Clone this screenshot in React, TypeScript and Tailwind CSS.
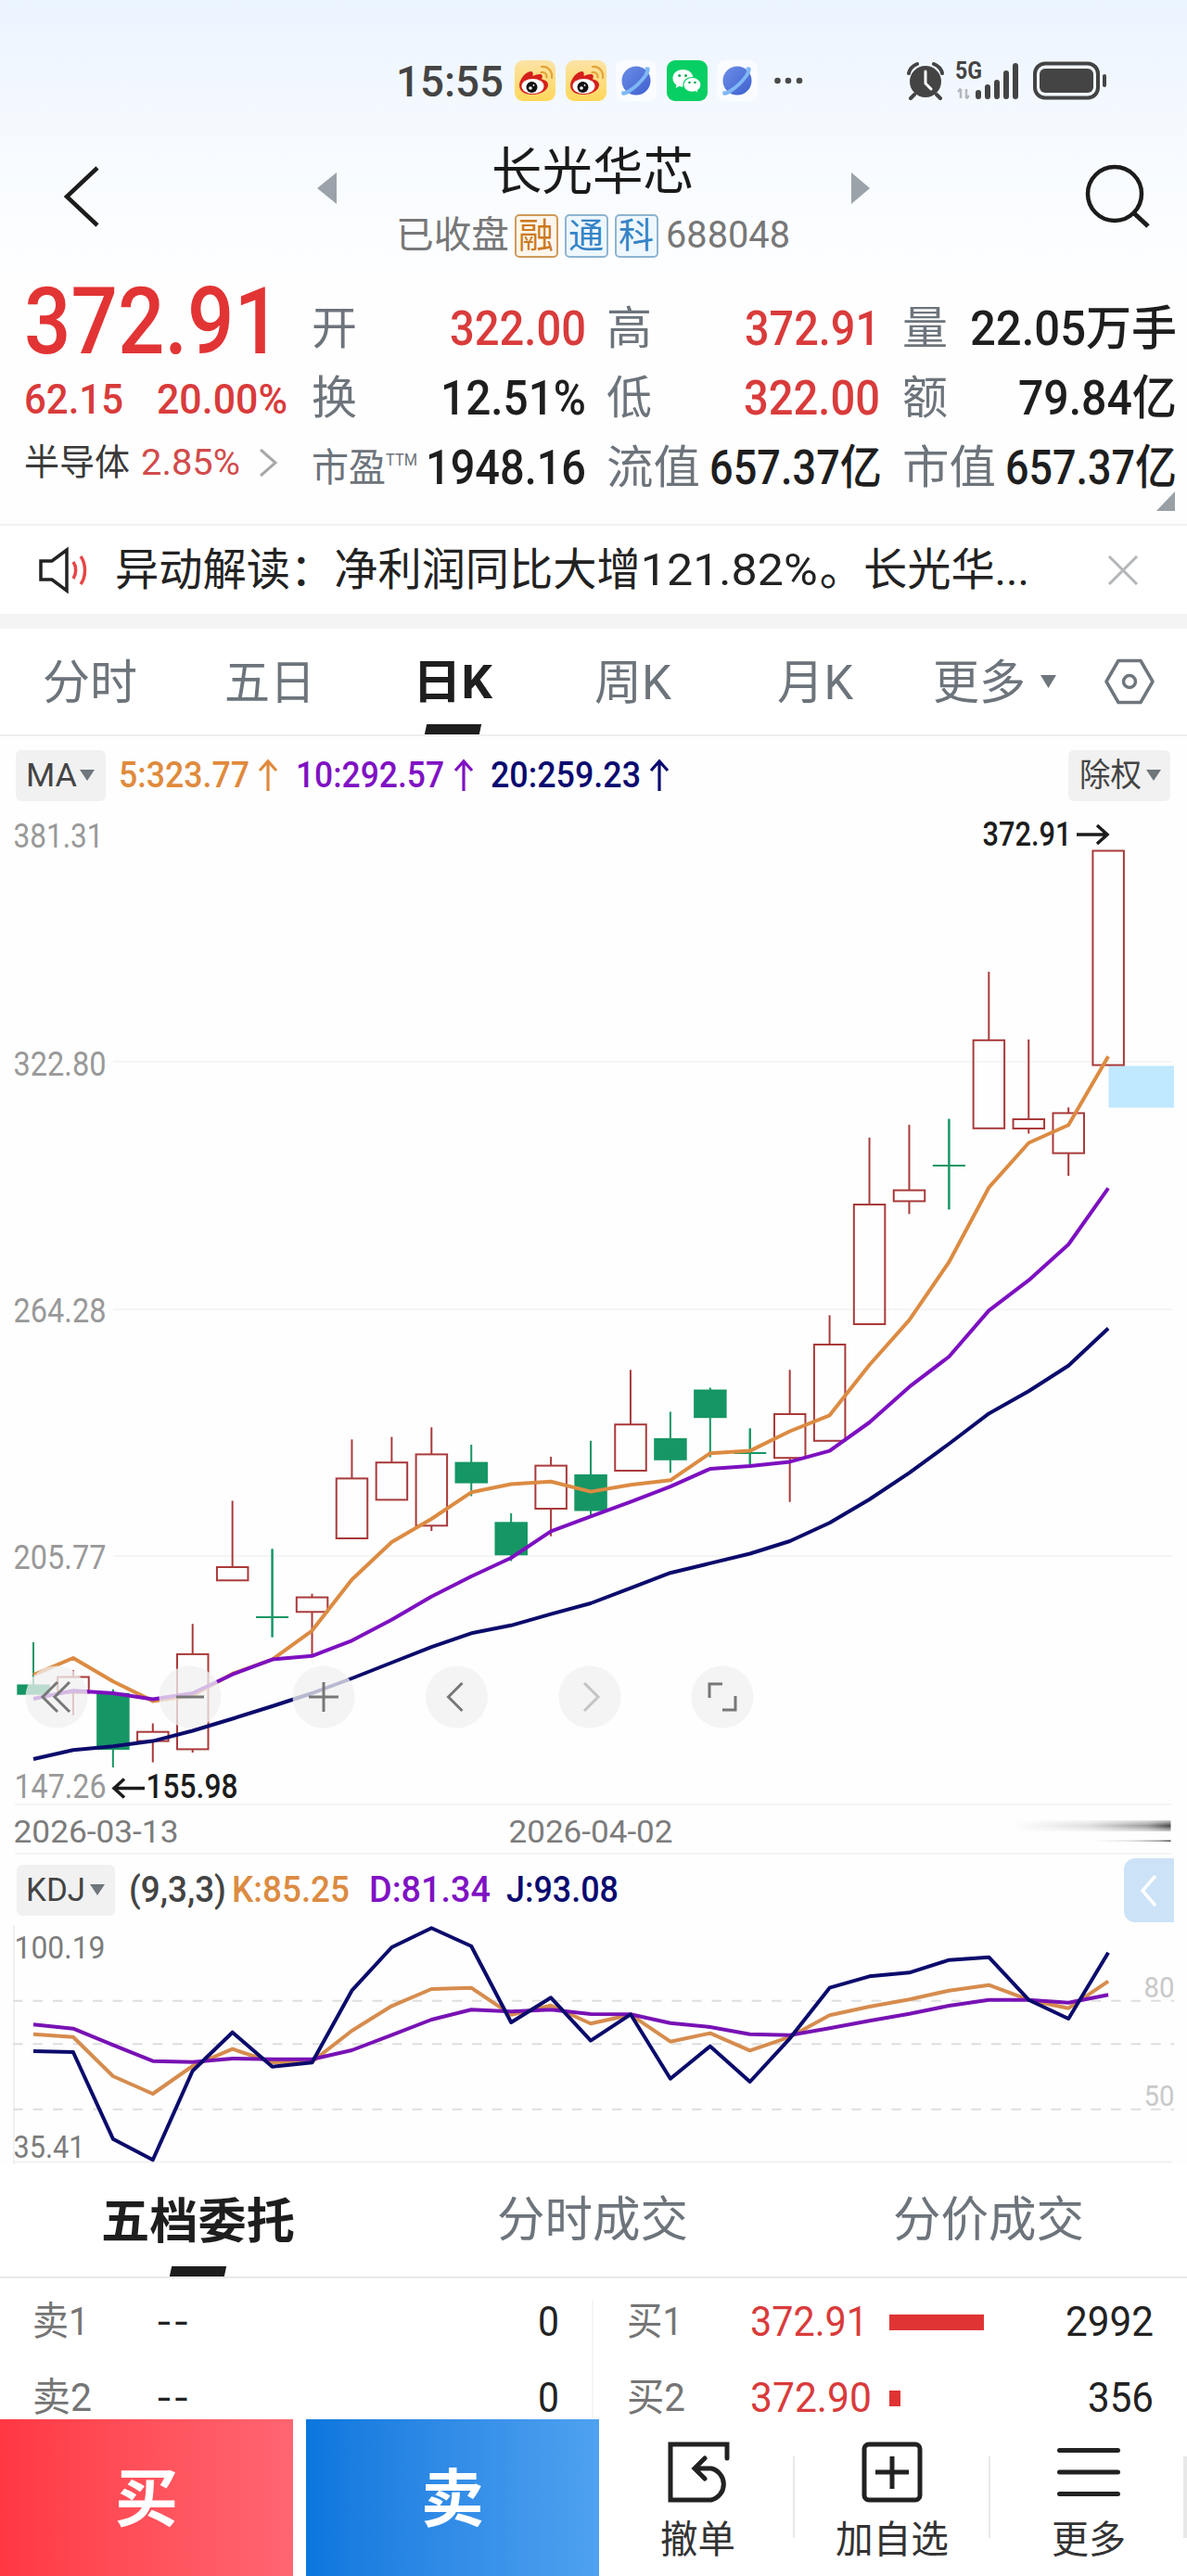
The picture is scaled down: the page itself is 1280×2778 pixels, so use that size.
import React, { useLayoutEffect, useRef, useState } from "react";

/* Text squeezed or stretched horizontally to a given width, like a condensed DIN face. */
function Fit({ w, className = "", children }: { w: number; className?: string; children: React.ReactNode }) {
  const ref = useRef<HTMLSpanElement>(null);
  const [s, setS] = useState(1);
  useLayoutEffect(() => {
    if (ref.current) setS(w / ref.current.getBoundingClientRect().width * s);
  }, [w]);
  return (
    <span className={"inline-flex shrink-0 justify-start whitespace-nowrap " + className} style={{ width: w }}>
      <span ref={ref} className="inline-block origin-left shrink-0" style={{ transform: `scaleX(${s})` }}>
        {children}
      </span>
    </span>
  );
}

const Weibo = () => (
  <svg className="h-11 w-[44px] shrink-0" viewBox="0 0 44 44">
    <defs>
      <linearGradient id="wb" x1="0" y1="0" x2="0" y2="1">
        <stop offset="0" stopColor="#fbe3a6" />
        <stop offset="1" stopColor="#ffd75a" />
      </linearGradient>
    </defs>
    <rect width="44" height="44" rx="9" fill="url(#wb)" />
    <path d="M5 27C5 20 13 11 18 12c2 .5 2 3 1.500 5 4-2 9-3 10-1 .8 1.500 0 3-.5 4.500 4 .5 7 2.500 7 6 0 6-8 10.500-17 10.500S5 33 5 27z" fill="#d5201c" />
    <ellipse cx="19.500" cy="28" rx="12" ry="8" fill="#fff" />
    <ellipse cx="18.500" cy="29" rx="6" ry="6" fill="#111" />
    <circle cx="17" cy="30" r="1.800" fill="#fff" />
    <circle cx="20.500" cy="27" r=".9" fill="#fff" />
    <path d="M29 7c7-1 12 5 11 12M28.500 13c4-.5 6.500 2 6 5.500" fill="none" stroke="#e2a33a" strokeWidth="2.200" strokeLinecap="round" />
  </svg>
);

const Planet = () => (
  <svg className="h-11 w-[44px] shrink-0" viewBox="0 0 44 44">
    <defs>
      <linearGradient id="pl" x1="0" y1="0" x2="1" y2="1">
        <stop offset="0" stopColor="#6c8fe6" />
        <stop offset="1" stopColor="#3f5fd0" />
      </linearGradient>
    </defs>
    <rect width="44" height="44" rx="9" fill="#fbfcff" />
    <circle cx="22" cy="22" r="15.500" fill="url(#pl)" />
    <path d="M31 8c5-2 7 0 5 5C33 21 19 34 12 37c-5 2-7 0-5-4 2 1 4 0 7-2C21 27 30 18 32 12c.6-2 .5-3-1-4z" fill="#7fb8f5" />
  </svg>
);

const WeChat = () => (
  <svg className="h-11 w-[44px] shrink-0" viewBox="0 0 44 44">
    <rect width="44" height="44" rx="9" fill="#07cf63" />
    <path d="M17.500 10C11 10 6.500 14 6.500 19.500c0 3 1.500 5.500 4 7.200L9.500 30l4-2c1.300.4 2.600.6 4 .6 6.500 0 11-4 11-9.200S24 10 17.500 10z" fill="#fff" />
    <path d="M27.500 18.500c-5.500 0-9.500 3.400-9.500 8s4 7.800 9.500 7.800c1.200 0 2.300-.2 3.300-.5l3.400 1.700-.8-2.900c2.200-1.500 3.600-3.600 3.600-6.100 0-4.600-4-8-9.500-8z" fill="#fff" stroke="#07cf63" strokeWidth="1.200" />
    <g fill="#07a855">
      <circle cx="13.700" cy="16.500" r="1.500" /><circle cx="20.500" cy="16.500" r="1.500" />
      <circle cx="24.500" cy="24" r="1.300" /><circle cx="30.500" cy="24" r="1.300" />
    </g>
  </svg>
);

function StatusBar() {
  return (
    <div className="flex h-[130px] items-start pt-[65px] pl-[427px]">
      <Fit w={116} className="mt-px text-[46px] leading-[44px] font-medium text-[#444]">15:55</Fit>
      <div className="ml-3 flex gap-[10.5px]"><Weibo /><Weibo /><Planet /><WeChat /><Planet /></div>
      <svg className="ml-[14px] h-11 w-9" viewBox="0 0 36 44">
        <g fill="#4a4a4a"><circle cx="7.500" cy="22" r="3.300" /><circle cx="19" cy="22" r="3.300" /><circle cx="31" cy="22" r="3.300" /></g>
      </svg>
      <svg className="ml-[109px] h-11 w-[44px]" viewBox="0 0 44 44">
        <circle cx="22" cy="23" r="17" fill="#444" />
        <path d="M4 14c1-5 4-8 9-10M40 14c-1-5-4-8-9-10M10 37l-4 4M34 37l4 4" stroke="#444" strokeWidth="4" strokeLinecap="round" fill="none" />
        <path d="M22 12v13l6 6" stroke="#fff" strokeWidth="3" fill="none" strokeLinecap="round" />
      </svg>
      <svg className="ml-[10px] h-11 w-[69px] shrink-0" viewBox="0 0 69 44">
        <text x="0" y="20" fontSize="25" fontWeight="700" fill="#444" textLength="29" lengthAdjust="spacingAndGlyphs">5G</text>
        <path d="M6 41V31M3 34l3-3.500M12 31v10M15 38l-3 3.500" stroke="#b5b8bd" strokeWidth="2.500" fill="none" />
        <g stroke="#444" strokeWidth="6" strokeLinecap="round">
          <path d="M25 35v4M35 29v10M45 24v15M55 14v25M65 6v33" />
        </g>
      </svg>
      <svg className="ml-[15px] h-11 w-[82px]" viewBox="0 0 82 44">
        <rect x="2" y="3.500" width="68" height="37" rx="11" fill="none" stroke="#444" strokeWidth="4" />
        <rect x="7" y="9" width="58" height="26" rx="6" fill="#444" />
        <path d="M77 17v10" stroke="#444" strokeWidth="4" strokeLinecap="round" />
      </svg>
    </div>
  );
}

function Tag({ c, children }: { c: "o" | "b"; children: React.ReactNode }) {
  const col = c === "o" ? "border-[#cf9a5a] bg-[#fdf6ec] text-[#cc7a22]" : "border-[#8fb4d0] bg-[#eef7fe] text-[#3584c6]";
  return <span className={"flex h-[47px] w-[47px] shrink-0 items-center justify-center rounded-[5px] border-2 text-[38px] leading-none " + col}>{children}</span>;
}

function Header() {
  return (
    <header className="h-[290px] bg-linear-to-b from-[#ebf4ff] via-[#f6faff] to-[#fdfeff]">
      <StatusBar />
      <div className="flex items-start">
        <svg className="mt-[47px] ml-[66px] h-[70px] w-[44px] shrink-0" viewBox="0 0 44 70">
          <path d="M39 4L6 35l33 31" fill="none" stroke="#1c1c1c" strokeWidth="4.500" />
        </svg>
        <svg className="mt-[55px] ml-[232px] h-9 w-[22px] shrink-0" viewBox="0 0 22 36"><path d="M21 1v34L0 18z" fill="#9aa3aa" /></svg>
        <div className="ml-[62px] flex w-[426px] flex-col items-center">
          <div className="mt-[26px] flex h-[58px] items-center text-[55px] leading-none text-[#1a1a1a]"><Fit w={218}>长光华芯</Fit></div>
          <div className="mt-[15px] flex h-[50px] items-center text-[40px] leading-none text-[#777]">
            <Fit w={122}>已收盘</Fit>
            <div className="ml-[6px] flex gap-[7px]"><Tag c="o">融</Tag><Tag c="b">通</Tag><Tag c="b">科</Tag></div>
            <Fit w={134} className="ml-[8px]">688048</Fit>
          </div>
        </div>
        <svg className="mt-[55px] ml-[65px] h-9 w-[22px] shrink-0" viewBox="0 0 22 36"><path d="M1 1v34l20-17z" fill="#9aa3aa" /></svg>
        <svg className="mt-[46px] ml-[231px] h-[72px] w-[74px] shrink-0" viewBox="0 0 74 72">
          <circle cx="32" cy="33" r="29" fill="none" stroke="#1c1c1c" strokeWidth="4.500" />
          <path d="M53 54l15 14" stroke="#1c1c1c" strokeWidth="5" />
        </svg>
      </div>
    </header>
  );
}

type Q = { l: React.ReactNode; lw: number; v: string; vw: number; red?: boolean };
function Cell({ q, className }: { q: Q; className: string }) {
  return (
    <div className={"flex h-[75px] items-center justify-between " + className}>
      <Fit w={q.lw} className="text-[49px] text-[#6d747b]">{q.l}</Fit>
      <Fit w={q.vw} className={"text-[51px] font-medium " + (q.red ? "text-[#d93b3b]" : "text-[#1e1e1e]")}>{q.v}</Fit>
    </div>
  );
}

function Quote() {
  const c1: Q[] = [{ l: "开", lw: 49, v: "322.00", vw: 147, red: true }, { l: "换", lw: 49, v: "12.51%", vw: 157 }];
  const c2: Q[] = [{ l: "高", lw: 49, v: "372.91", vw: 146, red: true }, { l: "低", lw: 49, v: "322.00", vw: 147, red: true }, { l: "流值", lw: 101, v: "657.37亿", vw: 186 }];
  const c3: Q[] = [{ l: "量", lw: 49, v: "22.05万手", vw: 223 }, { l: "额", lw: 49, v: "79.84亿", vw: 171 }, { l: "市值", lw: 101, v: "657.37亿", vw: 185 }];
  return (
    <section className="flex h-[275px] bg-[#fefefe] leading-none">
      <div className="ml-[26px] w-[310px]">
        <div className="mt-[7px] flex h-[100px] items-center text-[100px] font-medium text-[#e23434]"><Fit w={277}>372.91</Fit></div>
        <div className="mt-[8px] flex h-[50px] items-center text-[45px] font-medium text-[#d93b3b]">
          <Fit w={107}>62.15</Fit><Fit w={141} className="ml-[36px]">20.00%</Fit>
        </div>
        <div className="mt-[19px] flex h-[50px] items-center text-[39px] text-[#3a3a3a]">
          <Fit w={114}>半导体</Fit><Fit w={107} className="ml-[12px] text-[#d14b4b]">2.85%</Fit>
          <svg className="ml-[20px] h-8 w-[22px]" viewBox="0 0 22 32"><path d="M2 2l16 14L2 30" fill="none" stroke="#a8a8a8" strokeWidth="3" /></svg>
        </div>
      </div>
      <div className="mt-[27px] w-[296px]">
        {c1.map((q, i) => <Cell key={i} q={q} className="" />)}
        <div className="flex h-[75px] items-center justify-between">
          <div className="flex items-start text-[#6d747b]"><Fit w={80} className="text-[42px]">市盈</Fit><Fit w={34} className="mt-[3px] text-[18px]">TTM</Fit></div>
          <Fit w={173} className="text-[51px] font-medium text-[#1e1e1e]">1948.16</Fit>
        </div>
      </div>
      <div className="mt-[27px] ml-[22px] w-[297px]">{c2.map((q, i) => <Cell key={i} q={q} className={i < 2 ? "pr-[2px]" : ""} />)}</div>
      <div className="mt-[27px] ml-[22px] w-[296px]">
        {c3.map((q, i) => <Cell key={i} q={q} className="" />)}
        <svg className="-mt-[12px] ml-[274px] h-[22px] w-[21px]" viewBox="0 0 21 22"><path d="M20 0v21H0z" fill="#98a0a6" /></svg>
      </div>
    </section>
  );
}

function News() {
  return (
    <section className="flex h-[97px] items-center border-t-2 border-[#f1f1f1] bg-white leading-none">
      <svg className="ml-[41px] h-[54px] w-[56px] shrink-0" viewBox="0 0 56 54">
        <path d="M31 5v44L15 37H3V17h12z" fill="none" stroke="#222" strokeWidth="3.500" />
        <path d="M38 18c3.500 5 3.500 13 0 18M46 12c6 8 6 22 0 30" fill="none" stroke="#e84545" strokeWidth="3.500" />
      </svg>
      <Fit w={986} className="ml-[27px] text-[48px] text-[#222]">异动解读：净利润同比大增<span className="inline-block w-[196px]"><Fit w={194}>121.82%</Fit></span>。长光华...</Fit>
      <svg className="ml-[84px] h-8 w-[34px]" viewBox="0 0 34 32"><path d="M2 1l30 30M32 1L2 31" stroke="#b4b7ba" strokeWidth="3" /></svg>
    </section>
  );
}

const Tri = ({ className }: { className: string }) => (
  <svg className={"shrink-0 " + className} viewBox="0 0 16 12" preserveAspectRatio="none"><path d="M0 0h16L8 12z" fill="#6f767c" /></svg>
);

function PeriodTabs() {
  const t = "mt-[3px] text-[51px] text-[#6d747b]";
  return (
    <nav className="flex h-[116px] items-center border-b-2 border-[#eeeeee] bg-white pl-[46px] leading-none">
      <Fit w={102} className={t}>分时</Fit>
      <Fit w={98} className={"ml-[94px] " + t}>五日</Fit>
      <div className="ml-[102px] flex h-[114px] w-[92px] flex-col items-center justify-end">
        <Fit w={86} className="text-[50px] font-bold text-[#1e1e1e]">日K</Fit>
        <span className="mt-[20px] h-[11px] w-[59px] -skew-x-12 bg-[#1e1e1e]" />
      </div>
      <Fit w={83} className={"ml-[107px] " + t}>周K</Fit>
      <Fit w={82} className={"ml-[114px] " + t}>月K</Fit>
      <Fit w={100} className={"ml-[86px] " + t}>更多</Fit>
      <Tri className="ml-[16px] h-[14px] w-[17px]" />
      <svg className="ml-[51px] h-[50px] w-[56px]" viewBox="0 0 56 50">
        <path d="M16 2.500h24L53 25 40 47.500H16L3 25z" fill="none" stroke="#6f767c" strokeWidth="3.500" strokeLinejoin="round" />
        <circle cx="28" cy="25" r="6.500" fill="none" stroke="#6f767c" strokeWidth="3.500" />
      </svg>
    </nav>
  );
}

const Up = ({ className }: { className: string }) => (
  <svg className={"h-9 w-[22px] shrink-0 " + className} viewBox="0 0 22 36"><path d="M11 35V3M2 13l9-10 9 10" fill="none" stroke="currentColor" strokeWidth="3.200" /></svg>
);

function MaRow() {
  return (
    <div className="flex h-[72px] items-center bg-[#fefefe] pt-[12px] pl-[17px] text-[38px] leading-none font-medium">
      <div className="flex h-[55px] w-[97px] shrink-0 items-center rounded-[6px] bg-[#f1f1f1] pl-[11px] text-[35px] font-normal text-[#444]">
        <Fit w={55}>MA</Fit><Tri className="ml-[3px] h-3 w-4" />
      </div>
      <Fit w={141} className="ml-[14px] text-[#e08a3c]">5:323.77</Fit><Up className="ml-[9px] text-[#e08a3c]" />
      <Fit w={160} className="ml-[19px] text-[#8012c4]">10:292.57</Fit><Up className="ml-[10px] text-[#8012c4]" />
      <Fit w={162} className="ml-[18px] text-[#0a0a70]">20:259.23</Fit><Up className="ml-[9px] text-[#0a0a70]" />
      <div className="ml-[430px] flex h-[55px] w-[110px] shrink-0 items-center rounded-[6px] bg-[#f1f1f1] pl-[12px] text-[35px] font-normal text-[#444]">
        <Fit w={67}>除权</Fit><Tri className="ml-[5px] h-3 w-4" />
      </div>
    </div>
  );
}

const X0 = 36;
const STEP = 42.93;
const pts = (ys: number[]) => ys.map((y, i) => `${(X0 + i * STEP).toFixed(1)},${y}`).join(" ");

/* high, body top, body bottom, low, kind: r = rising, g = falling, c = unchanged */
const candles: [number, number, number, number, string][] = [
  [1771, 1817.5, 1826.7, 1826.7, "g"], [1801, 1808.5, 1825.6, 1849.7, "r"], [1821.7, 1826.7, 1886, 1906, "g"],
  [1858.5, 1867.7, 1877.6, 1900.6, "r"], [1751.3, 1783.9, 1886.4, 1890, "r"], [1618.5, 1690, 1704.3, 1704.3, "r"],
  [1670.6, 1744, 1744, 1765.5, "c"], [1718.8, 1722.6, 1738.3, 1785.8, "r"], [1552.3, 1594.4, 1659, 1659, "r"],
  [1549.6, 1577.2, 1617.4, 1617.4, "r"], [1539.3, 1568.4, 1645.3, 1651, "r"], [1558, 1577.6, 1598.6, 1613.5, "g"],
  [1632, 1642.3, 1676.3, 1683.6, "g"], [1571, 1580.6, 1627, 1656.8, "r"], [1553.8, 1591, 1628.5, 1634, "g"],
  [1477.3, 1536.2, 1586, 1586, "r"], [1522.5, 1552, 1573.8, 1588.3, "g"], [1496.4, 1499.5, 1528.2, 1571.5, "g"],
  [1540.5, 1566.9, 1566.9, 1580, "c"], [1477.3, 1525, 1572.2, 1619.7, "r"], [1418.4, 1450, 1553.8, 1553.8, "r"],
  [1226.8, 1299, 1428, 1428, "r"], [1212.9, 1283.6, 1295.4, 1309.3, "r"], [1206.8, 1257, 1257, 1304.3, "c"],
  [1047.9, 1121.8, 1216.8, 1216.8, "r"], [1121, 1207, 1217, 1222.5, "r"], [1194.3, 1200.4, 1243.6, 1268, "r"],
  [917.5, 917.5, 1148.6, 1148.6, "r"],
];
const ma5 = [1806.4, 1788, 1813.3, 1834.4, 1828.6, 1805, 1789.6, 1758.6, 1703.5, 1663, 1638, 1609.3, 1600.5, 1597.8, 1608.6, 1601.3, 1596.3, 1567.2, 1564.6, 1543.5, 1526.3, 1472, 1423.7, 1361, 1280.7, 1232.5, 1213.2, 1139.3];
const ma10 = [1832, 1823.3, 1826, 1832.5, 1826, 1805.7, 1789.6, 1785.8, 1769.3, 1746.7, 1721.8, 1700, 1680, 1651.4, 1635.4, 1619.7, 1603.2, 1584, 1581, 1576.4, 1564.6, 1534, 1495.7, 1463, 1413.4, 1380.7, 1342, 1281.4];
const ma20 = [1897, 1887.2, 1883.3, 1877.6, 1866.5, 1853.5, 1840, 1826, 1810, 1793, 1776.2, 1761.3, 1752.8, 1740.6, 1729, 1712.7, 1696.2, 1685.9, 1675.5, 1662, 1642.2, 1617, 1588.3, 1557, 1524.4, 1500.3, 1472.7, 1432.5];
const kJ = [2212, 2213, 2306.7, 2329.3, 2233.3, 2191.7, 2228.7, 2224.3, 2146.7, 2100, 2079.3, 2098.7, 2181, 2154.3, 2200.7, 2172.3, 2241.7, 2206.7, 2245, 2198.3, 2143.7, 2131.3, 2127.3, 2113.7, 2110.7, 2156.7, 2177, 2105.7];
const kK = [2193.7, 2196.7, 2239, 2258, 2228, 2209.7, 2224, 2223.3, 2190, 2163.3, 2145, 2143.7, 2172.7, 2162.7, 2182.3, 2172.7, 2201.7, 2192.7, 2211.3, 2196.7, 2173.3, 2164, 2156.3, 2146.7, 2140.7, 2156.7, 2165.7, 2136.7];
const kD = [2183.3, 2187.7, 2205.3, 2222.7, 2223.7, 2220, 2220.7, 2220.7, 2211, 2194.7, 2178, 2167.3, 2169.3, 2167.3, 2172, 2172.3, 2181.7, 2186, 2193.7, 2194.7, 2187.3, 2179.3, 2171.7, 2163, 2156.7, 2156.7, 2159.7, 2151.3];

const T = ({ x, y, w, s = 36, f = "#999", wt = 400, children }: { x: number; y: number; w: number; s?: number; f?: string; wt?: number; children: string }) => (
  <text x={x - 1.5} y={y} fontSize={s} fontWeight={wt} fill={f} textLength={w + 3} lengthAdjust="spacingAndGlyphs">{children}</text>
);

function KLine() {
  const buttons: [number, string, string][] = [
    [61, "M1-16L-15 0 1 16M14-16L-2 0l16 16", "#777"], [205, "M-15 0H15", "#777"], [349, "M-16 0H16M0-16V16", "#777"],
    [492.5, "M6-15L-9 0 6 15", "#777"], [636, "M-6-15L9 0-6 15", "#c4c4c4"], [779, "M-14 1V-14H0M14-1V14H0", "#777"],
  ];
  return (
    <svg className="block h-[1134px] w-[1280px] bg-[#fefefe]" viewBox="0 866 1280 1134">
      <defs>
        <linearGradient id="fade" x1="0" x2="1" y1="0" y2="0"><stop offset="0" stopColor="#fefefe" /><stop offset=".5" stopColor="#dcdcdc" /><stop offset=".85" stopColor="#999" /><stop offset="1" stopColor="#444" /></linearGradient>
        <linearGradient id="soft" x1="0" x2="0" y1="0" y2="1"><stop offset="0" stopColor="#fefefe" /><stop offset=".5" stopColor="#fefefe" stopOpacity="0" /><stop offset="1" stopColor="#fefefe" /></linearGradient>
      </defs>
      <g stroke="#f5f5f5" strokeWidth="2">
        <path d="M122 1145H1264M122 1412H1264M122 1678H1264M16 1946H1264M16 1999H1264" />
      </g>
      <T x={16} y={914} w={94}>381.31</T>
      <T x={16} y={1159.5} w={97}>322.80</T>
      <T x={16} y={1426} w={97}>264.28</T>
      <T x={16} y={1692} w={97}>205.77</T>
      <T x={17} y={1939} w={96}>147.26</T>
      <rect x="1195.500" y="1149.500" width="70.500" height="45" fill="#c0e8ff" />
      {candles.map(([h, t, b, l, k], i) => {
        const x = X0 + i * STEP;
        const c = k === "r" ? "#a93a3a" : "#169664";
        return (
          <g key={i} stroke={c} strokeWidth="2" fill={k === "g" ? c : "none"}>
            <path d={`M${x} ${h}V${t}M${x} ${b}V${l}`} />
            {k === "c" ? <path d={`M${x - 17.5} ${t}h35M${x} ${h}V${l}`} /> : <rect x={x - 16.7} y={t} width="33.500" height={b - t} />}
          </g>
        );
      })}
      <g fill="none" strokeWidth="4" strokeLinejoin="round">
        <polyline points={pts(ma5)} stroke="#dc8b42" />
        <polyline points={pts(ma10)} stroke="#7d10c0" />
        <polyline points={pts(ma20)} stroke="#0b0b6c" />
      </g>
      <T x={1061} y={911.5} w={93} f="#1c1c1c" wt={500}>372.91</T>
      <path d="M1161 900h32M1183 890l11 10-11 10" stroke="#1c1c1c" strokeWidth="3.500" fill="none" />
      <T x={159} y={1939} w={96} f="#1c1c1c" wt={500}>155.98</T>
      <path d="M156 1928.500h-32M134 1918.500l-11 10 11 10" stroke="#1c1c1c" strokeWidth="3.500" fill="none" />
      {buttons.map(([x, d, c]) => (
        <g key={x} transform={`translate(${x} 1830)`}>
          <circle r="33.500" fill="#f1f1f1" fillOpacity=".76" />
          <path d={d} fill="none" stroke={c} strokeWidth="3" />
        </g>
      ))}
      <T x={16} y={1986.5} w={175} s={34} f="#7c7c7c">2026-03-13</T>
      <T x={550} y={1986.5} w={174} s={34} f="#7c7c7c">2026-04-02</T>
      <rect x="1093" y="1963" width="169.500" height="12" fill="url(#fade)" />
      <rect x="1092" y="1961" width="172" height="16" fill="url(#soft)" />
      <rect x="1180" y="1984.500" width="82.500" height="1.500" fill="url(#fade)" />
    </svg>
  );
}

function KdjPanel() {
  return (
    <section className="bg-[#fefefe]">
      <div className="flex h-[76px] items-center pl-[18px] text-[38px] leading-none font-medium">
        <div className="flex h-[55px] w-[106px] shrink-0 items-center rounded-[6px] bg-[#f1f1f1] pl-[10px] text-[35px] font-normal text-[#444]">
          <Fit w={64}>KDJ</Fit><Tri className="ml-[5px] h-3 w-4" />
        </div>
        <Fit w={105} className="ml-[15px] text-[#444]">(9,3,3)</Fit>
        <Fit w={127} className="ml-[6px] text-[#dc8b42]">K:85.25</Fit>
        <Fit w={131} className="ml-[21px] text-[#8012c4]">D:81.34</Fit>
        <Fit w={121} className="ml-[17px] text-[#0a0a70]">J:93.08</Fit>
        <div className="mt-[4px] ml-[545px] flex h-[69px] w-[54px] items-center justify-center self-start rounded-l-[12px] bg-[#cce2f7]">
          <svg className="h-[36px] w-5" viewBox="0 0 20 36"><path d="M17 2L3 18l14 16" fill="none" stroke="#fff" strokeWidth="3.500" /></svg>
        </div>
      </div>
      <svg className="block h-[259px] w-[1280px]" viewBox="0 2076 1280 259">
        <path d="M15 2076V2334M14 2331.500H1264" stroke="#f1f1f1" strokeWidth="2" />
        <g stroke="#dedede" strokeWidth="2" strokeDasharray="10.500 11.030" fill="none">
          <path d="M14 2157.700H1266M14 2204.300H1266M14 2274.800H1266" />
        </g>
        <T x={17} y={2112} w={95} s={34} f="#7c7c7c">100.19</T>
        <T x={16} y={2326.5} w={74} s={34} f="#7c7c7c">35.41</T>
        <T x={1235} y={2153.5} w={30} s={31} f="#c9c9c9">80</T>
        <T x={1235} y={2271} w={30} s={31} f="#c9c9c9">50</T>
        <g fill="none" strokeWidth="4" strokeLinejoin="round">
          <polyline points={pts(kK)} stroke="#d68c4e" />
          <polyline points={pts(kD)} stroke="#7812b4" />
          <polyline points={pts(kJ)} stroke="#0b0b6c" />
        </g>
      </svg>
    </section>
  );
}

function OrderBook() {
  const sells = [["卖1", "0"], ["卖2", "0"]];
  const buys: [string, string, string, number, number][] = [["买1", "372.91", "2992", 102, 95], ["买2", "372.90", "356", 12, 71]];
  const row = "flex h-[46px] items-center text-[44px]";
  return (
    <section className="h-[274px] bg-white leading-none">
      <div className="flex h-[122px] border-b-2 border-[#e9e9e9] text-[52px] text-[#6d747b]">
        <div className="flex w-[426px] flex-col items-center justify-end">
          <Fit w={209} className="font-bold text-[#1e1e1e]">五档委托</Fit>
          <span className="mt-[21px] h-[11px] w-[59px] -skew-x-12 bg-[#1e1e1e]" />
        </div>
        <div className="flex w-[426px] justify-center pt-[34px]"><Fit w={206}>分时成交</Fit></div>
        <div className="flex w-[428px] justify-center pt-[34px]"><Fit w={206}>分价成交</Fit></div>
      </div>
      <div className="flex h-[152px] pt-[24px]">
        <div className="flex w-[640px] flex-col gap-9 border-r-2 border-[#f5f5f5]">
          {sells.map(([a, c], i) => (
            <div key={a} className={row}>
              <div className="ml-[35px] w-[64px] text-[42px] text-[#757575]"><Fit w={i ? 64 : 61}>{a}</Fit></div>
              <Fit w={37} className="ml-[71px] tracking-[4px] text-[#222]">--</Fit>
              <Fit w={23} className="mr-[35px] ml-auto text-[#222]">{c}</Fit>
            </div>
          ))}
        </div>
        <div className="flex w-[640px] flex-col gap-9">
          {buys.map(([a, b, c, bar, w], i) => (
            <div key={a} className={row}>
              <div className="ml-[36px] w-[63px] text-[42px] text-[#757575]"><Fit w={i ? 63 : 60}>{a}</Fit></div>
              <Fit w={i ? 131 : 127} className="ml-[70px] text-[#d93b3b]">{b}</Fit>
              <span className={(i ? "ml-[19px]" : "ml-[23px]") + " h-[17px] bg-[#e03434]"} style={{ width: bar }} />
              <Fit w={w} className="mr-[36px] ml-auto text-[#222]">{c}</Fit>
            </div>
          ))}
        </div>
      </div>
    </section>
  );
}

function BottomBar() {
  const box = "flex h-full flex-col items-center justify-start";
  const ic = "mt-[22px] h-[70px] w-[70px]";
  const tx = "mt-[18px] text-[41px] text-[#333]";
  return (
    <footer className="flex h-[169px] bg-white leading-none">
      <button className="flex h-full w-[316px] items-center justify-center bg-linear-to-r from-[#ff3743] to-[#ff6571] pt-[5px] text-[68px] font-bold text-white">买</button>
      <button className="ml-[14px] flex h-full w-[316px] items-center justify-center bg-linear-to-r from-[#0a76dd] to-[#4ea2f0] pt-[5px] text-[68px] font-bold text-white">卖</button>
      <div className={box + " w-[209px] pl-[4px]"}>
        <svg className={ic} viewBox="0 0 70 70" fill="none" stroke="#222" strokeWidth="5" strokeLinecap="round">
          <path d="M66 20V5H5V65H49A17.500 17.500 0 0 0 49 31H31M42 20L31 31l11 11" />
        </svg>
        <Fit w={81} className={tx}>撤单</Fit>
      </div>
      <span className="mt-[40px] h-[88px] w-[2px] bg-[#e8e8e8]" />
      <div className={box + " w-[209px]"}>
        <svg className={ic} viewBox="0 0 70 70" fill="none" stroke="#222" strokeWidth="5">
          <rect x="5" y="5" width="60" height="60" rx="5" /><path d="M17 35h36M35 18v35" />
        </svg>
        <Fit w={122} className={tx}>加自选</Fit>
      </div>
      <span className="mt-[40px] h-[88px] w-[2px] bg-[#e8e8e8]" />
      <div className={box + " w-[208px] pl-[3px]"}>
        <svg className={ic} viewBox="0 0 70 70" fill="none" stroke="#222" strokeWidth="5" strokeLinecap="round">
          <path d="M3.500 11.500h63M3.500 35h63M3.500 58.500h63" />
        </svg>
        <Fit w={80} className={tx}>更多</Fit>
      </div>
      <span className="mt-[40px] h-[88px] w-[4px] bg-[#e8e8e8]" />
    </footer>
  );
}

export default function App() {
  return (
    <main className="h-[2778px] w-[1280px] overflow-hidden bg-white font-['Roboto','Noto_Sans_CJK_SC',sans-serif]">
      <Header />
      <Quote />
      <News />
      <div className="h-4 bg-[#f4f4f4]" />
      <PeriodTabs />
      <MaRow />
      <KLine />
      <KdjPanel />
      <OrderBook />
      <BottomBar />
    </main>
  );
}
